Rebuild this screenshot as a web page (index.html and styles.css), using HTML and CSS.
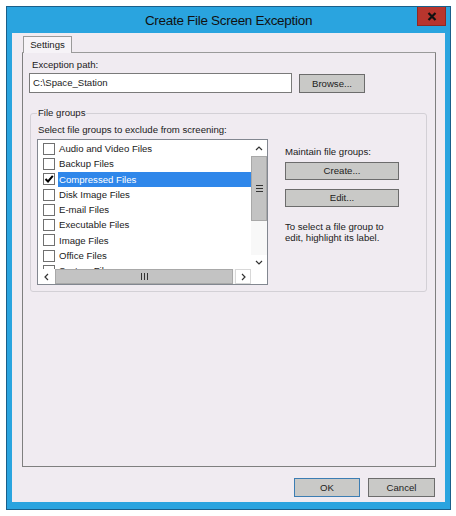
FILE: index.html
```html
<!DOCTYPE html>
<html>
<head>
<meta charset="utf-8">
<link rel="stylesheet" href="styles.css">
</head>
<body>
<div class="window">
  <div class="titlebar">
    <div class="title">Create File Screen Exception</div>
    <div class="close"><svg width="10" height="9" viewBox="0 0 10 9"><path d="M1.5 1 L8.5 8 M8.5 1 L1.5 8" stroke="#111" stroke-width="2.2" fill="none"/></svg></div>
  </div>
  <div class="client">
    <div class="tabs">
      <div class="tab-edge"></div>
      <div class="tab">Settings</div>
      <div class="tab-fill"></div>
    </div>
    <div class="panel">
      <div class="field-label">Exception path:</div>
      <div class="path-row">
        <div class="input">C:\Space_Station</div>
        <div class="btn browse">Browse...</div>
      </div>
      <fieldset class="group">
        <legend>File groups</legend>
        <div class="sub-label">Select file groups to exclude from screening:</div>
        <div class="group-body">
          <div class="listbox">
            <div class="items">
              <div class="item"><span class="check"></span><span class="name">Audio and Video Files</span></div>
              <div class="item"><span class="check"></span><span class="name">Backup Files</span></div>
              <div class="item"><span class="check"><svg width="10" height="10" viewBox="0 0 10 10"><path d="M1.5 5 L4 7.5 L8.8 1.8" stroke="#000" stroke-width="2" fill="none"/></svg></span><span class="name selected">Compressed Files</span></div>
              <div class="item"><span class="check"></span><span class="name">Disk Image Files</span></div>
              <div class="item"><span class="check"></span><span class="name">E-mail Files</span></div>
              <div class="item"><span class="check"></span><span class="name">Executable Files</span></div>
              <div class="item"><span class="check"></span><span class="name">Image Files</span></div>
              <div class="item"><span class="check"></span><span class="name">Office Files</span></div>
              <div class="item"><span class="check"></span><span class="name">System Files</span></div>
            </div>
            <div class="vscroll">
              <div class="sbtn up"><svg width="8" height="5" viewBox="0 0 8 5"><path d="M1 4 L4 1 L7 4" stroke="#333" stroke-width="1.2" fill="none"/></svg></div>
              <div class="vthumb"><svg width="7" height="7" viewBox="0 0 7 7"><rect x="0" y="0" width="7" height="1" fill="#333"/><rect x="0" y="3" width="7" height="1" fill="#333"/><rect x="0" y="6" width="7" height="1" fill="#333"/></svg></div>
              <div class="vtrack"></div>
              <div class="sbtn down"><svg width="8" height="5" viewBox="0 0 8 5"><path d="M1 1 L4 4 L7 1" stroke="#333" stroke-width="1.2" fill="none"/></svg></div>
            </div>
            <div class="hscroll">
              <div class="sbtn left"><svg width="5" height="8" viewBox="0 0 5 8"><path d="M4 1 L1 4 L4 7" stroke="#333" stroke-width="1.2" fill="none"/></svg></div>
              <div class="hthumb"><svg width="7" height="7" viewBox="0 0 7 7"><rect x="0" y="0" width="1" height="7" fill="#333"/><rect x="3" y="0" width="1" height="7" fill="#333"/><rect x="6" y="0" width="1" height="7" fill="#333"/></svg></div>
              <div class="htrack"></div>
              <div class="sbtn right"><svg width="5" height="8" viewBox="0 0 5 8"><path d="M1 1 L4 4 L1 7" stroke="#333" stroke-width="1.2" fill="none"/></svg></div>
            </div>
            <div class="corner"></div>
          </div>
          <div class="side">
            <div class="side-label">Maintain file groups:</div>
            <div class="btn side-btn create">Create...</div>
            <div class="btn side-btn edit">Edit...</div>
            <div class="hint">To select a file group to<br>edit, highlight its label.</div>
          </div>
        </div>
      </fieldset>
    </div>
    <div class="footer">
      <div class="btn ok">OK</div>
      <div class="btn cancel">Cancel</div>
    </div>
  </div>
</div>
</body>
</html>
```

FILE: styles.css
```css
* { box-sizing: border-box; }

body {
  margin: 0;
  background: #ffffff;
  font-family: "Liberation Sans", Arial, sans-serif;
  font-size: 9.6px;
  color: #1a1a1a;
}

.window {
  margin: 6px 0 0 6px;
  width: 445px;
  height: 504px;
  border: 1px solid #1a5f8a;
  background: #2aa4df;
  display: flex;
  flex-direction: column;
}

.titlebar {
  height: 26px;
  display: grid;
  grid-template-columns: 1fr auto 1fr;
  align-items: start;
}

.title {
  grid-column: 2;
  font-size: 13.5px;
  letter-spacing: -0.3px;
  line-height: 27px;
  color: #111;
}

.close {
  grid-column: 3;
  justify-self: end;
  margin-right: 4px;
  width: 29px;
  height: 19px;
  background: #b8352d;
  border: 1px solid #8f2923;
  border-top: 0;
  display: flex;
  align-items: center;
  justify-content: center;
}

.client {
  flex: 1;
  margin: 0 5px 7px 5px;
  background: #f0ebf1;
  padding: 3px 9px 5px 10px;
  display: flex;
  flex-direction: column;
}

.tabs {
  height: 17px;
  display: flex;
}

.tab-edge {
  width: 1px;
  border-bottom: 1px solid #9a9a9a;
}

.tab {
  width: 49px;
  border: 1px solid #9a9a9a;
  border-bottom: 0;
  background: #f6f3f7;
  text-align: center;
  line-height: 15px;
  font-size: 9.6px;
}

.tab-fill {
  flex: 1;
  border-bottom: 1px solid #9a9a9a;
}

.panel {
  flex: 1;
  border: 1px solid #7f7f7f;
  border-top: 0;
  padding: 6px 8px 0 6px;
  display: flex;
  flex-direction: column;
}

.field-label {
  margin-left: 3px;
  line-height: 12px;
}

.path-row {
  margin-top: 2px;
  display: flex;
  align-items: flex-start;
}

.input {
  width: 263px;
  height: 20px;
  border: 1px solid #7a7a7a;
  background: #ffffff;
  padding-left: 3px;
  line-height: 18px;
}

.btn {
  background: #c9c9c7;
  border: 1px solid #6c6c6c;
  text-align: center;
  color: #222;
}

.browse {
  margin-left: 7px;
  margin-top: 1px;
  width: 66px;
  height: 19px;
  line-height: 17px;
}

.group {
  margin: 14px 0 0 1px;
  padding: 5px 6px 6px 6px;
  border: 1px solid #d3d0d6;
  border-radius: 3px;
  min-width: 0;
}

.group legend {
  padding: 0 1px;
  line-height: 12px;
}

.sub-label {
  margin-left: 1px;
  line-height: 12px;
}

.group-body {
  margin-top: 3px;
  display: flex;
  align-items: flex-start;
}

.listbox {
  width: 231px;
  height: 146px;
  border: 1px solid #828790;
  background: #ffffff;
  display: grid;
  grid-template-columns: 1fr 16px;
  grid-template-rows: 1fr 15px;
}

.items {
  overflow: hidden;
  padding-top: 1px;
}

.item {
  height: 15.3px;
  display: flex;
  align-items: center;
}

.check {
  margin-left: 5px;
  width: 12px;
  height: 12px;
  border: 1px solid #707070;
  background: #fff;
  display: flex;
  align-items: center;
  justify-content: center;
}

.name {
  flex: 1;
  margin-left: 3px;
  padding-left: 1px;
  height: 15.3px;
  line-height: 15.3px;
}

.name.selected {
  background: #2f87ea;
  color: #ffffff;
}

.vscroll {
  display: flex;
  flex-direction: column;
  background: #f8f8f8;
}

.sbtn {
  display: flex;
  align-items: center;
  justify-content: center;
  background: #ffffff;
}

.up { height: 16px; }
.down { height: 14px; }

.vthumb {
  height: 65px;
  background: #c3c3c3;
  border: 1px solid #a8a8a8;
  display: flex;
  align-items: center;
  justify-content: center;
}

.vtrack { flex: 1; }

.hscroll {
  display: flex;
  background: #f8f8f8;
}

.left { width: 17px; }

.hthumb {
  width: 178px;
  background: #c3c3c3;
  border: 1px solid #a8a8a8;
  display: flex;
  align-items: center;
  justify-content: center;
}

.htrack { flex: 1; }

.right {
  width: 16px;
  border: 1px solid #d8d8d8;
}

.corner {
  background: #ffffff;
}

.side {
  margin-left: 17px;
  padding-top: 7px;
  display: flex;
  flex-direction: column;
}

.side-label {
  line-height: 12px;
}

.side-btn {
  width: 114px;
  height: 18px;
  line-height: 16px;
}

.create { margin-top: 4px; }
.edit { margin-top: 9px; }

.hint {
  margin-top: 14px;
  line-height: 11px;
}

.footer {
  margin-top: 11px;
  padding-right: 1px;
  display: flex;
  justify-content: flex-end;
  gap: 8px;
}

.ok, .cancel {
  height: 19px;
  line-height: 17px;
}

.ok {
  width: 66px;
  border-color: #3c7db3;
}

.cancel {
  width: 67px;
}
```
